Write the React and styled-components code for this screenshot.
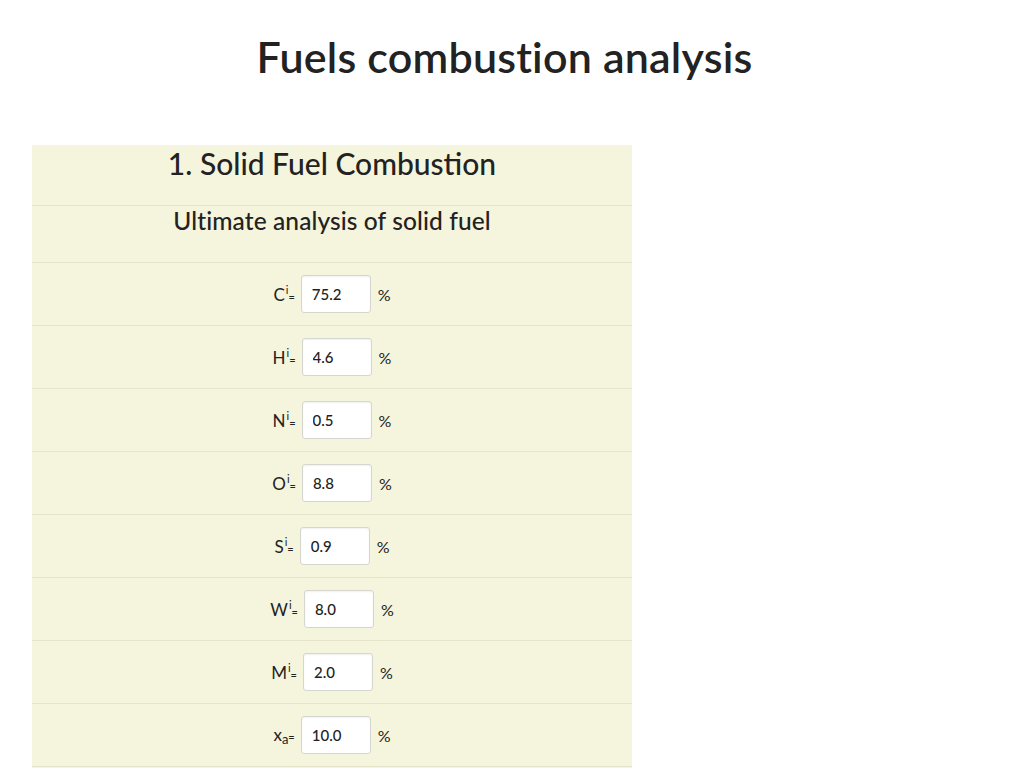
import React from "react";
import styled, { createGlobalStyle } from "styled-components";

const GlobalStyle = createGlobalStyle`
  html {
    overflow-y: scroll;
  }
  body {
    margin: 0;
    background: #fff;
    color: #222;
    font-family: Lato, "Open Sans", sans-serif;
  }
`;

const Page = styled.div`
  padding: 0 47px 0 32px;
`;

const Title = styled.h1`
  margin: 0;
  padding: 31px 0 62px;
  text-align: center;
  font-size: 43px;
  font-weight: 600;
  letter-spacing: 0.2px;
  line-height: 52px;
  color: #222;
`;

const Panel = styled.div`
  width: 600px;
  background: #f5f4dc;
  padding-bottom: 700px;
`;

const HeadRow = styled.div`
  height: ${(p) => p.$h}px;
  display: flex;
  justify-content: center;
  box-sizing: border-box;
  border-bottom: 1px solid #e6e4cb;
  font-size: ${(p) => p.$size}px;
  font-weight: 500;
  color: #222;
  letter-spacing: ${(p) => p.$ls}px;
`;

const Row = styled.div`
  height: 63px;
  display: flex;
  align-items: center;
  justify-content: center;
  gap: 6px;
  border-bottom: 1px solid #e6e4cb;
  box-sizing: border-box;
  font-size: 17px;
  color: #222;
`;

const Label = styled.span`
  white-space: nowrap;
`;

const Sup = styled.span`
  font-size: 11px;
  vertical-align: 7px;
  margin-left: 1px;
`;

const Sub = styled.span`
  font-size: 13px;
  vertical-align: -3px;
`;

const Eq = styled.span`
  font-size: 11px;
`;

const Input = styled.input`
  width: 70px;
  height: 38px;
  box-sizing: border-box;
  padding: 0 10px;
  border: 1px solid #d6d6d0;
  border-radius: 3px;
  background: #fff;
  box-shadow: inset 0 1px 2px rgba(0, 0, 0, 0.06);
  font-family: Lato, "Open Sans", sans-serif;
  font-size: 15px;
  font-weight: 500;
  color: #222;
  outline: none;
`;

const Unit = styled.span`
  font-size: 16px;
  margin-left: 1px;
`;

const rows = [
  { base: "C", sup: "i", value: "75.2" },
  { base: "H", sup: "i", value: "4.6" },
  { base: "N", sup: "i", value: "0.5" },
  { base: "O", sup: "i", value: "8.8" },
  { base: "S", sup: "i", value: "0.9" },
  { base: "W", sup: "i", value: "8.0" },
  { base: "M", sup: "i", value: "2.0" },
  { base: "x", sub: "a", value: "10.0" },
];

const InputRow = ({ r }) => (
  <Row>
    <Label>
      {r.base}
      {r.sup && <Sup>{r.sup}</Sup>}
      {r.sub && <Sub>{r.sub}</Sub>}
      <Eq>=</Eq>
    </Label>
    <Input defaultValue={r.value} />
    <Unit>%</Unit>
  </Row>
);

export default function App() {
  return (
    <>
      <GlobalStyle />
      <Page>
        <Title>Fuels combustion analysis</Title>
        <Panel>
          <HeadRow $h={61} $size={30} $ls={0}>
            1. Solid Fuel Combustion
          </HeadRow>
          <HeadRow $h={57} $size={24.5} $ls={0.1}>
            Ultimate analysis of solid fuel
          </HeadRow>
          {rows.map((r) => (
            <InputRow key={r.base + (r.sup || r.sub)} r={r} />
          ))}
        </Panel>
      </Page>
    </>
  );
}
